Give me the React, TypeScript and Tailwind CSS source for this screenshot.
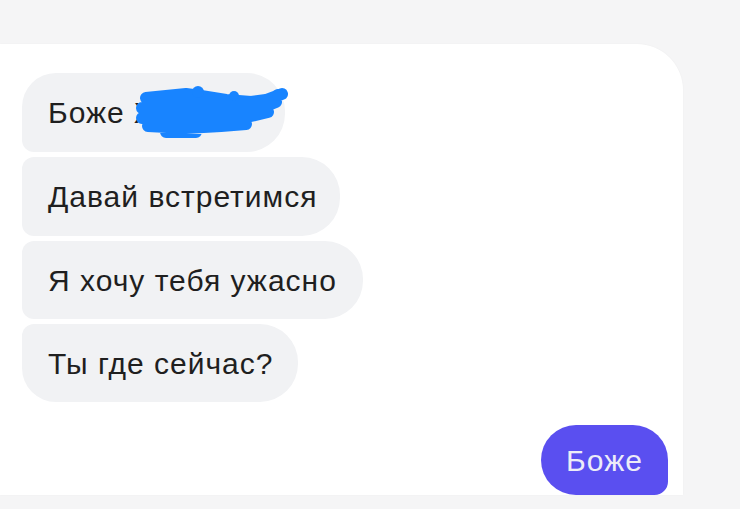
import React from "react";

const font = { fontFamily: '"Liberation Sans", Arial, sans-serif' };

export default function App() {
  return (
    <div className="w-[740px] h-[509px] bg-[#f5f5f6] pt-[44px] overflow-hidden" style={font}>
      <div className="relative w-[683px] h-[451px] bg-white rounded-tr-[46px] pl-[22px] pt-[29px] shadow-[0_0_2px_rgba(0,0,0,0.04)]">
        <div className="flex flex-col items-start gap-[5px] text-[30px] tracking-[1px] text-[#1f1f1f]">
          <div className="relative h-[79px] w-[263px] bg-[#f1f2f4] rounded-tl-[34px] rounded-tr-[38px] rounded-br-[38px] rounded-bl-[12px] pl-[26px] flex items-center">
            <span>Боже Ж</span>
            <svg className="absolute left-[104px] top-[11px]" width="164" height="56" viewBox="0 0 164 56">
              <path
                d="M20 14 L 60 10 L 75 12 L 100 16 L 125 18 L 140 16 L 156 10 M 16 24 L 60 22 L 100 24 L 135 24 L 150 18 M 16 34 L 50 34 L 90 34 L 125 32 L 142 28 M 22 42 L 60 44 L 95 42 L 120 40 M 40 48 L 70 48"
                fill="none"
                stroke="#1884ff"
                strokeWidth="12"
                strokeLinecap="round"
                strokeLinejoin="round"
              />
              <circle cx="72" cy="8" r="6" fill="#1884ff" />
              <circle cx="108" cy="12" r="5" fill="#1884ff" />
              <circle cx="152" cy="11" r="6" fill="#1884ff" />
            </svg>
          </div>
          <div className="h-[79px] bg-[#f1f2f4] rounded-l-[12px] rounded-r-[38px] pl-[26px] pr-[23px] flex items-center">
            Давай встретимся
          </div>
          <div className="h-[78px] bg-[#f1f2f4] rounded-l-[12px] rounded-r-[38px] pl-[26px] pr-[26px] flex items-center">
            Я хочу тебя ужасно
          </div>
          <div className="h-[78px] bg-[#f1f2f4] rounded-tl-[12px] rounded-bl-[34px] rounded-r-[38px] pl-[26px] pr-[25px] flex items-center">
            Ты где сейчас?
          </div>
        </div>
        <div className="absolute right-[15px] bottom-0 h-[70px] w-[127px] bg-[#5a4ff0] rounded-tl-[36px] rounded-tr-[36px] rounded-bl-[36px] rounded-br-[14px] flex items-center justify-center text-[30px] tracking-[1px] text-[#ececf8]">
          Боже
        </div>
      </div>
    </div>
  );
}
